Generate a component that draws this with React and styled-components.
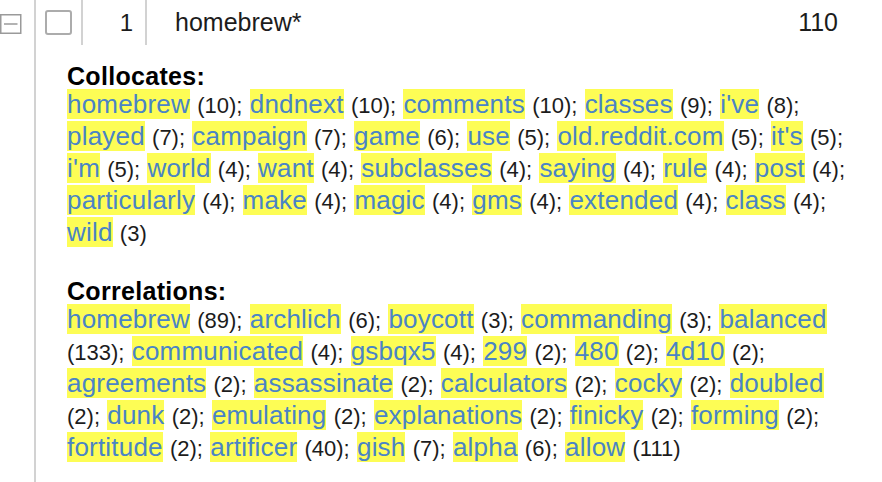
import React from 'react';
import styled, { createGlobalStyle } from 'styled-components';

const Global = createGlobalStyle`
  html, body {
    margin: 0;
    padding: 0;
    background: #fff;
  }
  body {
    font-family: "Liberation Sans", Arial, sans-serif;
    color: #1c1c1c;
  }
`;

const Page = styled.div`
  width: 882px;
  height: 482px;
  overflow: hidden;
  display: flex;
  flex-direction: column;
`;

const Row = styled.div`
  display: flex;
  height: 45px;
  flex: none;
`;

const Cell = styled.div`
  width: ${p => p.$w}px;
  flex: none;
  display: flex;
  align-items: center;
  justify-content: ${p => p.$align || 'flex-start'};
  box-sizing: border-box;
  border-right: ${p => (p.$line ? '2px solid #d2d2d2' : 'none')};
  padding: ${p => p.$pad || '0'};
`;

const TermCell = styled.div`
  flex: 1;
  display: flex;
  align-items: center;
  justify-content: space-between;
  padding: 0 44px 0 28px;
  font-size: 25px;
  color: #1c1c1c;
`;

const Checkbox = styled.span`
  width: 27px;
  height: 25px;
  box-sizing: border-box;
  border: 2.5px solid #acacac;
  border-radius: 3px;
  margin-left: 9px;
`;

const Num = styled.span`
  font-size: 24px;
`;

const Body = styled.div`
  flex: 1;
  display: flex;
`;

const Gutter = styled.div`
  width: 34px;
  flex: none;
  border-right: 2px solid #d2d2d2;
`;

const Detail = styled.div`
  padding: 19px 0 0 31px;
`;

const Section = styled.section`
  & + & {
    margin-top: 31px;
  }
`;

const Heading = styled.div`
  font-size: 25px;
  font-weight: bold;
  line-height: 24px;
  letter-spacing: 0.3px;
  color: #000;
`;

const Line = styled.div`
  font-size: 26px;
  line-height: 32px;
  height: 32px;
  white-space: nowrap;
`;

const Link = styled.span`
  color: #4a84c6;
  background: #fdfd55;
  letter-spacing: 0.2px;
`;

const Count = styled.span`
  font-size: 22px;
  line-height: 1;
`;

const ToggleIcon = () => (
  <svg width="22" height="20" viewBox="0 0 22 20" style={{ marginTop: 2 }}>
    <rect x="0.75" y="0.75" width="20" height="18.5" fill="none" stroke="#9a9a9a" strokeWidth="1.5" />
    <line x1="4" y1="10" x2="17.5" y2="10" stroke="#9a9a9a" strokeWidth="1.5" />
  </svg>
);

const collocates = [
  "homebrew (10); dndnext (10); comments (10); classes (9); i've (8);",
  "played (7); campaign (7); game (6); use (5); old.reddit.com (5); it's (5);",
  "i'm (5); world (4); want (4); subclasses (4); saying (4); rule (4); post (4);",
  'particularly (4); make (4); magic (4); gms (4); extended (4); class (4);',
  'wild (3)',
];

const correlations = [
  'homebrew (89); archlich (6); boycott (3); commanding (3); balanced',
  '(133); communicated (4); gsbqx5 (4); 299 (2); 480 (2); 4d10 (2);',
  'agreements (2); assassinate (2); calculators (2); cocky (2); doubled',
  '(2); dunk (2); emulating (2); explanations (2); finicky (2); forming (2);',
  'fortitude (2); artificer (40); gish (7); alpha (6); allow (111)',
];

const renderLine = (text, i) => {
  const tokens = text.split(' ');
  return (
    <Line key={i}>
      {tokens.map((t, j) => (
        <React.Fragment key={j}>
          {j > 0 && ' '}
          {t.startsWith('(') ? <Count>{t}</Count> : <Link>{t}</Link>}
        </React.Fragment>
      ))}
    </Line>
  );
};

export default function App() {
  return (
    <Page>
      <Global />
      <Row>
        <Cell $w={36} $line>
          <ToggleIcon />
        </Cell>
        <Cell $w={47} $line>
          <Checkbox />
        </Cell>
        <Cell $w={64} $line $align="flex-end" $pad="0 12px 0 0">
          <Num>1</Num>
        </Cell>
        <TermCell>
          <span>homebrew*</span>
          <span>110</span>
        </TermCell>
      </Row>
      <Body>
        <Gutter />
        <Detail>
          <Section>
            <Heading>Collocates:</Heading>
            {collocates.map(renderLine)}
          </Section>
          <Section>
            <Heading>Correlations:</Heading>
            {correlations.map(renderLine)}
          </Section>
        </Detail>
      </Body>
    </Page>
  );
}
